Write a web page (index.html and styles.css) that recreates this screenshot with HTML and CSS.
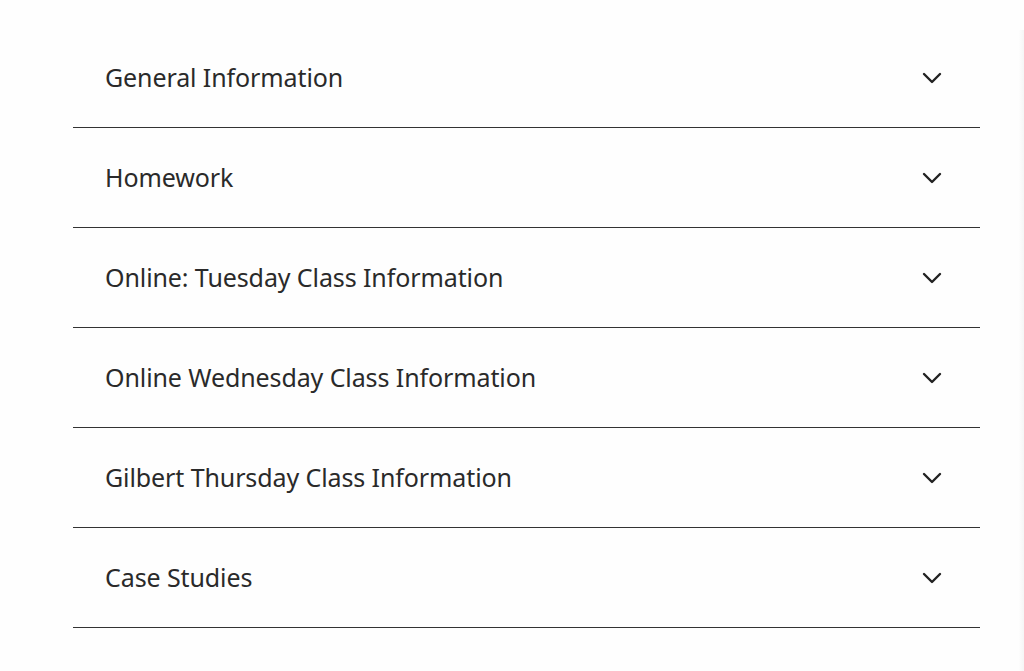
FILE: index.html
```html
<!DOCTYPE html>
<html lang="en">
<head>
<meta charset="utf-8">
<title>Accordion</title>
<link rel="stylesheet" href="styles.css">
</head>
<body>
<div class="page">
  <ul class="accordion">
    <li class="item"><span class="label">General Information</span><svg class="chev" viewBox="0 0 20 12" width="20" height="12"><path d="M2 2 L10 10 L18 2" fill="none" stroke="#222" stroke-width="2.4" stroke-linecap="round" stroke-linejoin="round"/></svg></li>
    <li class="item"><span class="label">Homework</span><svg class="chev" viewBox="0 0 20 12" width="20" height="12"><path d="M2 2 L10 10 L18 2" fill="none" stroke="#222" stroke-width="2.4" stroke-linecap="round" stroke-linejoin="round"/></svg></li>
    <li class="item"><span class="label">Online: Tuesday Class Information</span><svg class="chev" viewBox="0 0 20 12" width="20" height="12"><path d="M2 2 L10 10 L18 2" fill="none" stroke="#222" stroke-width="2.4" stroke-linecap="round" stroke-linejoin="round"/></svg></li>
    <li class="item"><span class="label">Online Wednesday Class Information</span><svg class="chev" viewBox="0 0 20 12" width="20" height="12"><path d="M2 2 L10 10 L18 2" fill="none" stroke="#222" stroke-width="2.4" stroke-linecap="round" stroke-linejoin="round"/></svg></li>
    <li class="item"><span class="label">Gilbert Thursday Class Information</span><svg class="chev" viewBox="0 0 20 12" width="20" height="12"><path d="M2 2 L10 10 L18 2" fill="none" stroke="#222" stroke-width="2.4" stroke-linecap="round" stroke-linejoin="round"/></svg></li>
    <li class="item"><span class="label">Case Studies</span><svg class="chev" viewBox="0 0 20 12" width="20" height="12"><path d="M2 2 L10 10 L18 2" fill="none" stroke="#222" stroke-width="2.4" stroke-linecap="round" stroke-linejoin="round"/></svg></li>
  </ul>
  <div class="edge"></div>
</div>
</body>
</html>
```

FILE: styles.css
```css
html, body {
  margin: 0;
  padding: 0;
  background: #fefefe;
}
body {
  font-family: "Noto Sans", "Open Sans", sans-serif;
  color: #2a2a2a;
  height: 671px;
  overflow: hidden;
}
.page {
  display: flex;
  height: 671px;
}
.accordion {
  list-style: none;
  margin: 28px 0 0 73px;
  padding: 0;
  width: 907px;
}
.item {
  height: 99px;
  border-bottom: 1px solid #333;
  display: flex;
  align-items: center;
  justify-content: space-between;
  padding: 0 38px 0 32px;
}
.label {
  font-size: 25px;
  letter-spacing: -0.1px;
  position: relative;
  top: -1px;
}
.chev {
  display: block;
}
.edge {
  margin-left: auto;
  margin-top: 30px;
  width: 5px;
  background: linear-gradient(to right, #fdfdfd, #f5f5f5);
}
```
